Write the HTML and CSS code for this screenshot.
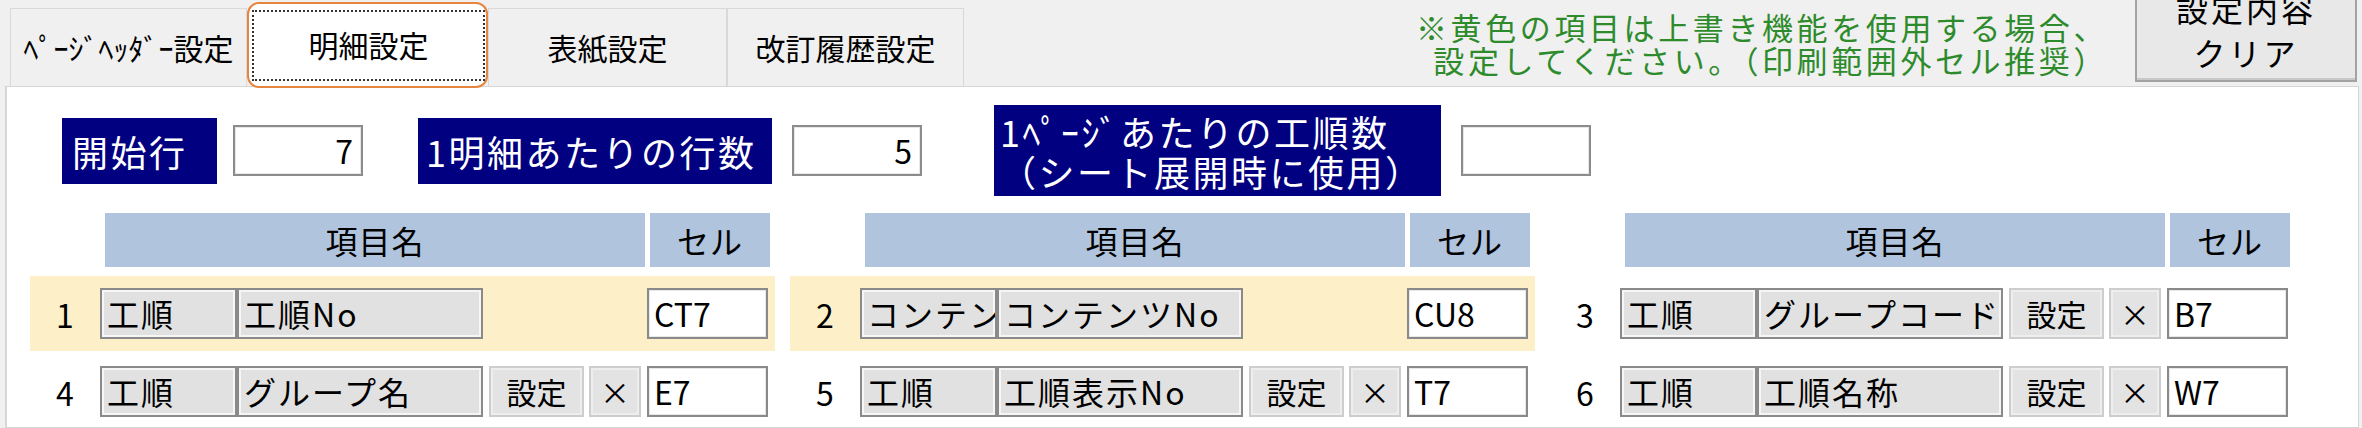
FILE: index.html
```html
<!DOCTYPE html>
<html lang="ja">
<head>
    <meta charset="UTF-8">
    <title>明細設定</title>
    <link rel="stylesheet" href="styles.css">
</head>
<body>
    <div class="topbar">
        <div class="tabs">
            <div class="tab">ﾍﾟｰｼﾞﾍｯﾀﾞｰ設定</div>
            <div class="tab tab-active"><span class="focus">明細設定</span></div>
            <div class="tab tab-wide">表紙設定</div>
            <div class="tab">改訂履歴設定</div>
        </div>
        <p class="note">※黄色の項目は上書き機能を使用する場合、<br>設定してください。（印刷範囲外セル推奨）</p>
        <button class="clear-button">設定内容<br>クリア</button>
    </div>

    <div class="panel">
        <div class="params">
            <div class="param-label label-start">開始行</div>
            <div class="num-input">7</div>
            <div class="param-label label-rows">1明細あたりの行数</div>
            <div class="num-input">5</div>
            <div class="param-label label-pages">1ﾍﾟｰｼﾞあたりの工順数<br>（シート展開時に使用）</div>
            <div class="num-input"></div>
        </div>

        <div class="columns">
            <div class="column">
                <div class="col-header">
                    <div class="h-name">項目名</div>
                    <div class="h-cell">セル</div>
                </div>
                <div class="items">
                    <div class="item highlight">
                        <span class="item-no">1</span>
                        <span class="box box-kind">工順</span>
                        <span class="box box-name">工順No</span>
                        <span class="cell">CT7</span>
                    </div>
                    <div class="item">
                        <span class="item-no">4</span>
                        <span class="box box-kind">工順</span>
                        <span class="box box-name">グループ名</span>
                        <span class="btn-set">設定</span>
                        <span class="btn-x">×</span>
                        <span class="cell">E7</span>
                    </div>
                </div>
            </div>

            <div class="column">
                <div class="col-header">
                    <div class="h-name">項目名</div>
                    <div class="h-cell">セル</div>
                </div>
                <div class="items">
                    <div class="item highlight">
                        <span class="item-no">2</span>
                        <span class="box box-kind">コンテンツ</span>
                        <span class="box box-name">コンテンツNo</span>
                        <span class="cell">CU8</span>
                    </div>
                    <div class="item">
                        <span class="item-no">5</span>
                        <span class="box box-kind">工順</span>
                        <span class="box box-name">工順表示No</span>
                        <span class="btn-set">設定</span>
                        <span class="btn-x">×</span>
                        <span class="cell">T7</span>
                    </div>
                </div>
            </div>

            <div class="column">
                <div class="col-header">
                    <div class="h-name">項目名</div>
                    <div class="h-cell">セル</div>
                </div>
                <div class="items">
                    <div class="item">
                        <span class="item-no">3</span>
                        <span class="box box-kind">工順</span>
                        <span class="box box-name">グループコード</span>
                        <span class="btn-set">設定</span>
                        <span class="btn-x">×</span>
                        <span class="cell">B7</span>
                    </div>
                    <div class="item">
                        <span class="item-no">6</span>
                        <span class="box box-kind">工順</span>
                        <span class="box box-name">工順名称</span>
                        <span class="btn-set">設定</span>
                        <span class="btn-x">×</span>
                        <span class="cell">W7</span>
                    </div>
                </div>
            </div>
        </div>
    </div>
</body>
</html>
```

FILE: styles.css
```css
* {
    margin: 0;
    padding: 0;
    box-sizing: border-box;
    font-family: "Noto Sans CJK JP", "Noto Sans", sans-serif;
}

body {
    width: 2362px;
    height: 428px;
    overflow: hidden;
    background: #f0f0f0;
    color: #000;
}

/* top: tabs, note, clear button */
.topbar {
    display: flex;
    height: 86px;
    padding-right: 5px;
}

.tabs {
    display: flex;
    align-items: flex-end;
    padding-left: 10px;
}

.tab {
    width: 237px;
    height: 78px;
    background: #f0f0f0;
    border: 1px solid #d9d9d9;
    border-bottom: none;
    font-size: 30px;
    line-height: 76px;
    text-align: center;
    white-space: nowrap;
}

.tab-wide {
    width: 239px;
}

.tab-active {
    position: relative;
    z-index: 1;
    width: 241px;
    height: 86px;
    margin-bottom: -2px;
    padding: 6px 1px 5px 3px;
    background: #fff;
    border: 2px solid #e5853f;
    border-radius: 12px;
}

.focus {
    display: flex;
    align-items: center;
    justify-content: center;
    height: 100%;
    border: 2px dotted #333;
    line-height: 1;
    padding-bottom: 4px;
}

.note {
    margin-left: auto;
    margin-top: 10px;
    color: #2e8b2b;
    font-size: 31px;
    letter-spacing: 3.6px;
    line-height: 33px;
    text-align: right;
    white-space: nowrap;
}

.clear-button {
    display: flex;
    flex-direction: column;
    align-items: center;
    width: 222px;
    height: 98px;
    margin: -16px 0 0 27px;
    padding-top: 0;
    background: #e8e8e8;
    border: 2px solid #a3a3a3;
    box-shadow: inset 0 -2px 0 #c8c8c8;
    font-size: 32px;
    letter-spacing: 3px;
    line-height: 44px;
    color: #000;
}

/* content panel */
.panel {
    width: 2354px;
    height: 342px;
    margin-left: 5px;
    padding-top: 18px;
    background: #fff;
    border: 1px solid #d6d6d6;
    border-left-width: 2px;
}

.params {
    display: flex;
    align-items: center;
    height: 91px;
    padding-left: 55px;
}

.param-label {
    background: #000080;
    color: #fff;
    font-size: 36px;
    letter-spacing: 2.5px;
    white-space: nowrap;
}

.label-start {
    width: 155px;
    height: 66px;
    padding-left: 10px;
    line-height: 66px;
}

.label-rows {
    width: 354px;
    height: 66px;
    margin-left: 55px;
    padding-left: 8px;
    line-height: 66px;
}

.label-pages {
    width: 447px;
    height: 91px;
    margin-left: 72px;
    padding: 6px 0 0 6px;
    line-height: 40px;
}

.num-input {
    width: 130px;
    height: 51px;
    margin-left: 16px;
    padding-right: 8px;
    background: #fff;
    border: 2px solid #8c8c8c;
    box-shadow: inset 0 0 0 1px #e8e8e8;
    font-size: 32px;
    line-height: 46px;
    text-align: right;
}

.label-rows + .num-input,
.label-pages + .num-input {
    margin-left: 20px;
}

/* item columns */
.columns {
    display: flex;
    gap: 15px;
    margin-top: 17px;
    padding-left: 23px;
}

.column {
    width: 745px;
}

.col-header {
    display: flex;
    gap: 5px;
    height: 54px;
    margin-bottom: 9px;
    padding-left: 75px;
}

.h-name,
.h-cell {
    background: #b0c4de;
    font-size: 32px;
    letter-spacing: 1px;
    line-height: 54px;
    text-align: center;
}

.h-name {
    width: 540px;
}

.h-cell {
    width: 120px;
}

.items {
    display: flex;
    flex-direction: column;
    gap: 3px;
}

.item {
    display: flex;
    align-items: center;
    height: 75px;
    padding-right: 7px;
}

.highlight {
    background: #fdf0c9;
}

.item-no {
    width: 70px;
    font-size: 32px;
    text-align: center;
}

.box,
.cell,
.btn-set,
.btn-x {
    height: 51px;
    font-size: 32px;
    line-height: 46px;
    white-space: nowrap;
    overflow: hidden;
}

.box {
    padding-left: 5px;
    background: #e1e1e1;
    border: 2px solid #8a8a8a;
    box-shadow: inset 0 0 0 2px #f6f6f6;
    letter-spacing: 2px;
}

.box-kind {
    width: 137px;
}

.box-name {
    width: 246px;
}

.btn-set,
.btn-x {
    background: #e3e3e3;
    border: 2px solid #cdcdcd;
    box-shadow: inset 0 0 0 2px #eeeeee;
    text-align: center;
}

.btn-set {
    width: 95px;
    margin-left: 6px;
    font-size: 30px;
}

.btn-x {
    width: 52px;
    margin-left: 5px;
    font-size: 30px;
}

.cell {
    width: 121px;
    margin-left: auto;
    padding-left: 5px;
    background: #fff;
    border: 2px solid #8a8a8a;
    box-shadow: inset 0 0 0 1px #e8e8e8;
}
```
